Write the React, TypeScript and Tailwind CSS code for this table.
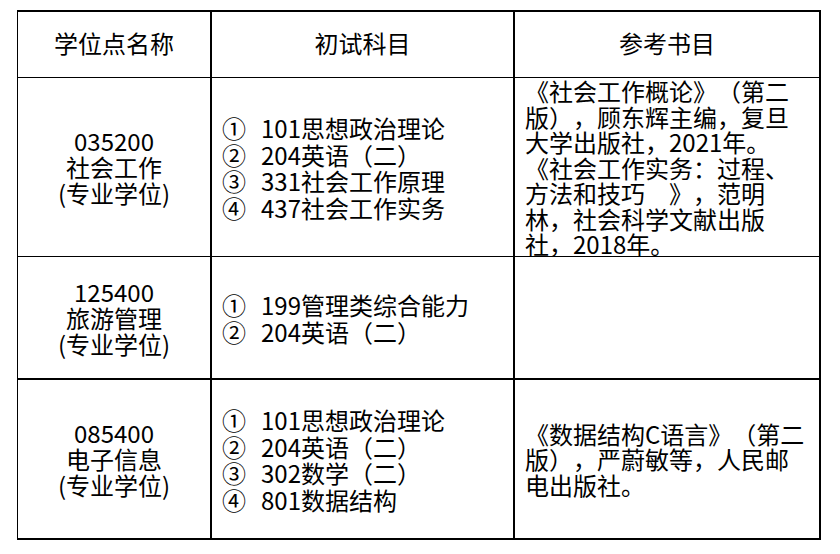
const font = "font-['Noto_Sans_CJK_SC','Noto_Sans_CJK_JP',sans-serif]";

type Row = {
  h: string;
  border: string;
  name: string[];
  subjects: string[];
  books: string[];
  booksTop?: boolean;
};

const circled = ["①", "②", "③", "④"];

const rows: Row[] = [
  {
    h: "h-[179px]",
    border: "border-b border-black",
    name: ["035200", "社会工作", "(专业学位)"],
    subjects: ["101思想政治理论", "204英语（二）", "331社会工作原理", "437社会工作实务"],
    books: [
      "《社会工作概论》（第二",
      "版），顾东辉主编，复旦",
      "大学出版社，2021年。",
      "《社会工作实务：过程、",
      "方法和技巧　》，范明",
      "林，社会科学文献出版",
      "社，2018年。",
    ],
    booksTop: true,
  },
  {
    h: "h-[123px]",
    border: "border-b-2 border-black",
    name: ["125400", "旅游管理", "(专业学位)"],
    subjects: ["199管理类综合能力", "204英语（二）"],
    books: [],
  },
  {
    h: "h-[158px]",
    border: "",
    name: ["085400", "电子信息", "(专业学位)"],
    subjects: ["101思想政治理论", "204英语（二）", "302数学（二）", "801数据结构"],
    books: ["《数据结构C语言》（第二", "版），严蔚敏等，人民邮", "电出版社。"],
  },
];

export default function App() {
  return (
    <div
      className={`w-[840px] h-[554px] bg-white pl-[17px] pt-[10px] text-black [text-spacing-trim:space-all] ${font}`}
    >
      <div className="w-[804px] border-l border-t-2 border-r-2 border-b-2 border-black">
        {/* header */}
        <div className="flex h-[66px] border-b border-black text-[24px] leading-[26px]">
          <div className="w-[194px] flex items-center justify-center pb-[4px] border-r-2 border-black">学位点名称</div>
          <div className="w-[303px] flex items-center justify-center pb-[4px] border-r-2 border-black">初试科目</div>
          <div className="w-[304px] flex items-center justify-center pb-[4px]">参考书目</div>
        </div>

        {rows.map((row, i) => (
          <div key={i} className={`flex ${row.h} ${row.border} text-[24px]`}>
            <div className="w-[194px] flex flex-col items-center justify-center border-r-2 border-black leading-[26px]">
              {row.name.map((t) => (
                <div key={t}>{t}</div>
              ))}
            </div>
            <div className="w-[303px] flex flex-col justify-center pl-[10px] pt-[2px] border-r-2 border-black leading-[26.5px]">
              {row.subjects.map((t, j) => (
                <div key={j} className="flex whitespace-nowrap">
                  <span className="w-[39px]">{circled[j]}</span>
                  <span>{t}</span>
                </div>
              ))}
            </div>
            <div
              className={`w-[304px] flex flex-col pl-[10px] leading-[25.5px] whitespace-nowrap ${
                row.booksTop ? "justify-start" : "justify-center"
              }`}
            >
              {row.books.map((t, j) => (
                <div key={j}>{t}</div>
              ))}
            </div>
          </div>
        ))}
      </div>
    </div>
  );
}
